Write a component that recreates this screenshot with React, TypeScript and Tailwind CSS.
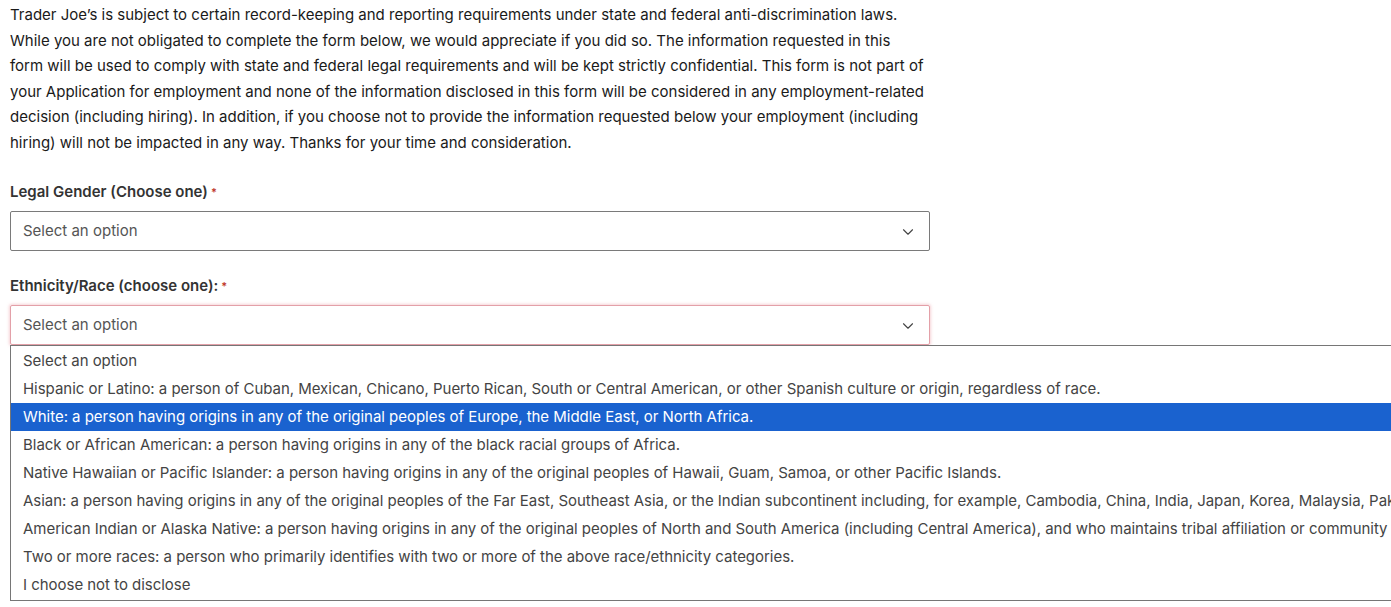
import { ChevronDown } from 'lucide-react';

const options = [
  'Select an option',
  'Hispanic or Latino: a person of Cuban, Mexican, Chicano, Puerto Rican, South or Central American, or other Spanish culture or origin, regardless of race.',
  'White: a person having origins in any of the original peoples of Europe, the Middle East, or North Africa.',
  'Black or African American: a person having origins in any of the black racial groups of Africa.',
  'Native Hawaiian or Pacific Islander: a person having origins in any of the original peoples of Hawaii, Guam, Samoa, or other Pacific Islands.',
  'Asian: a person having origins in any of the original peoples of the Far East, Southeast Asia, or the Indian subcontinent including, for example, Cambodia, China, India, Japan, Korea, Malaysia, Pakistan, the Philippine Islands, Thailand, and Vietnam.',
  'American Indian or Alaska Native: a person having origins in any of the original peoples of North and South America (including Central America), and who maintains tribal affiliation or community attachment.',
  'Two or more races: a person who primarily identifies with two or more of the above race/ethnicity categories.',
  'I choose not to disclose',
];

const intro = [
  'Trader Joe’s is subject to certain record-keeping and reporting requirements under state and federal anti-discrimination laws.',
  'While you are not obligated to complete the form below, we would appreciate if you did so. The information requested in this',
  'form will be used to comply with state and federal legal requirements and will be kept strictly confidential. This form is not part of',
  'your Application for employment and none of the information disclosed in this form will be considered in any employment-related',
  'decision (including hiring). In addition, if you choose not to provide the information requested below your employment (including',
  'hiring) will not be impacted in any way. Thanks for your time and consideration.',
];

function Label({ text }: { text: string }) {
  return (
    <label className="block text-[15px] font-semibold text-[#333] leading-5">
      {text}
      <span className="ml-[3px] align-top text-[11px] text-[#c0392b]">*</span>
    </label>
  );
}

export default function App() {
  return (
    <div className="relative h-[607px] w-[1391px] overflow-hidden bg-white font-['Inter',sans-serif] text-[#1a1a1a]">
      <div className="w-[940px] pl-[10px] pt-[2px]">
        <p className="text-[15px] leading-[25.6px]">
          {intro.map((line) => (
            <span key={line} className="block whitespace-nowrap">{line}</span>
          ))}
        </p>

        <div className="mt-[26px]">
          <Label text="Legal Gender (Choose one)" />
          <div className="mt-[9px] flex h-10 w-[920px] items-center justify-between rounded-[2px] border border-[#7a7a7a] pl-[12px] pr-[12px] pt-[2px] text-[15px] text-[#555]">
            <span>Select an option</span>
            <ChevronDown className="h-[18px] w-[18px] text-[#444]" strokeWidth={1.5} />
          </div>
        </div>

        <div className="mt-[25px]">
          <Label text="Ethnicity/Race (choose one):" />
          <div className="relative mt-[9px]">
            <div className="flex h-10 w-[920px] items-center justify-between rounded-[2px] border border-[#e3a0a8] pl-[12px] pr-[12px] pt-[2px] text-[15px] text-[#555] shadow-[0_0_3px_1px_rgba(230,130,140,0.35)]">
              <span>Select an option</span>
              <ChevronDown className="h-[18px] w-[18px] text-[#444]" strokeWidth={1.5} />
            </div>
            <ul className="absolute left-0 top-10 w-[1500px] border border-[#767676] bg-white py-px text-[15px] tracking-[-0.03px] text-[#444]">
              {options.map((o, i) => (
                <li
                  key={o}
                  className={
                    'h-7 whitespace-nowrap pl-[12px] leading-7 ' +
                    (i === 2 ? 'bg-[#1a62cf] text-white' : '')
                  }
                >
                  {o}
                </li>
              ))}
            </ul>
          </div>
        </div>
      </div>
    </div>
  );
}
